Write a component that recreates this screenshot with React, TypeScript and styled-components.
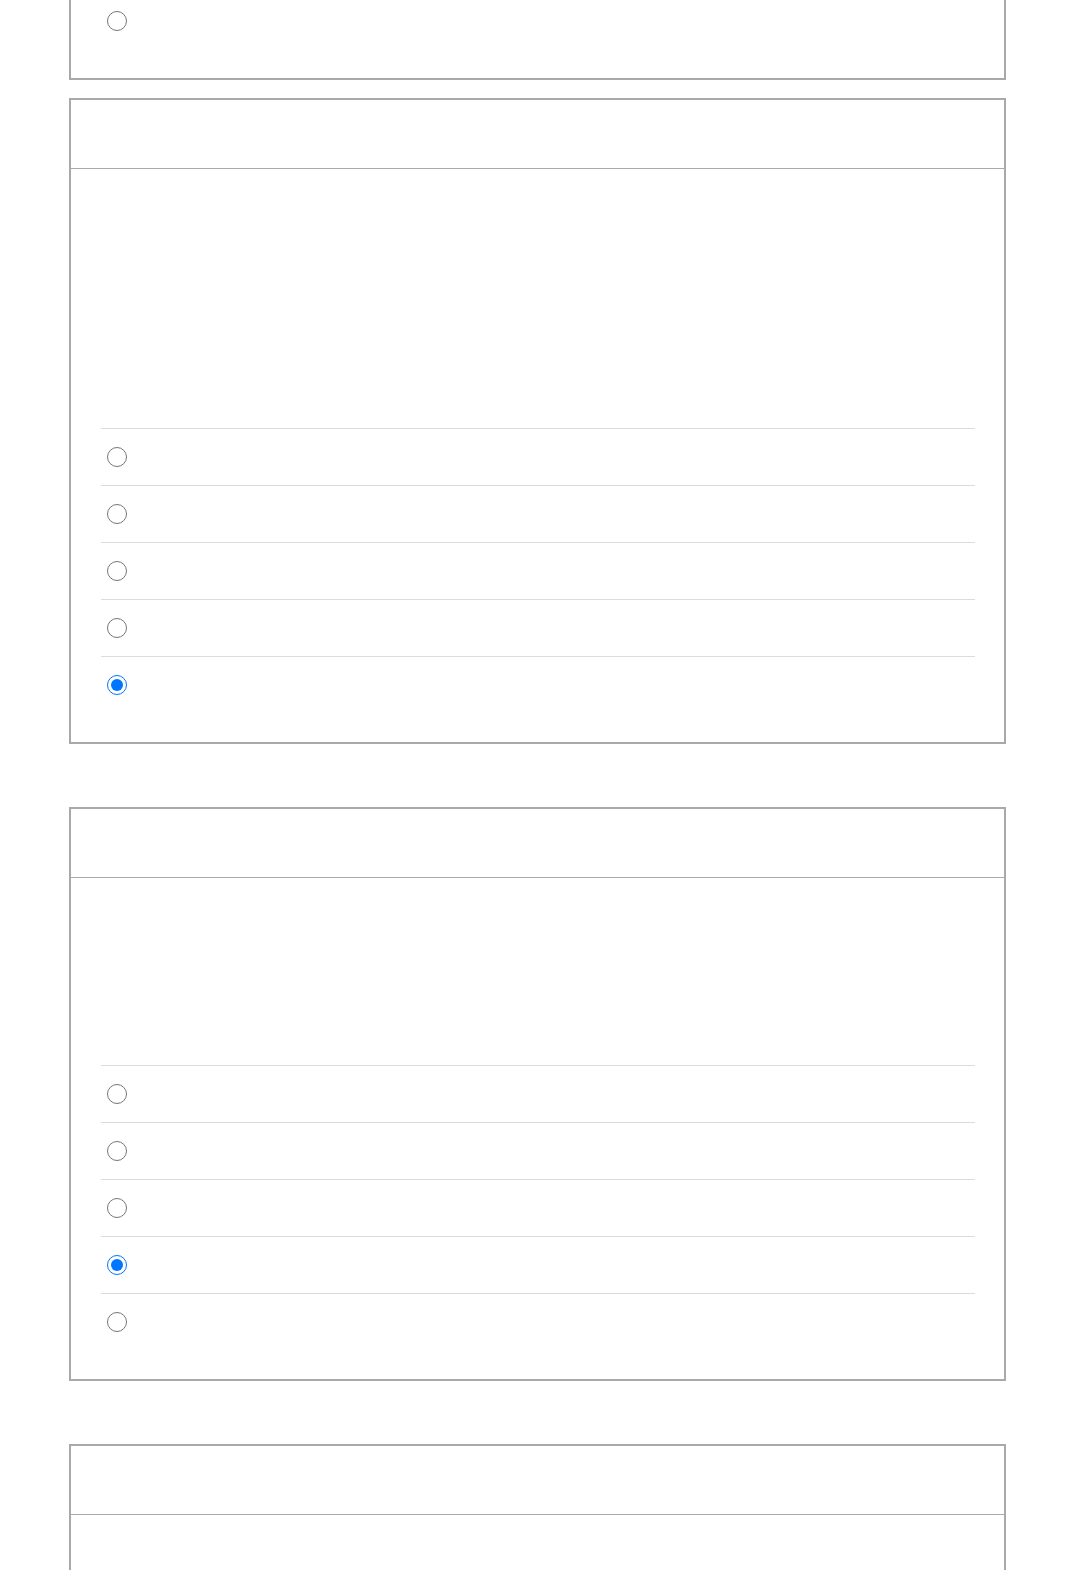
import React from "react";
import styled, { createGlobalStyle } from "styled-components";

const Global = createGlobalStyle`
  html, body { margin: 0; padding: 0; background: #ffffff; }
  body { font-family: "Liberation Sans", Arial, sans-serif; color: #222; }
`;

const Page = styled.div`
  display: flex;
  flex-direction: column;
  gap: 63px;
  width: 937px;
  margin: -494px 0 0 69px;
`;

const Section = styled.section`
  display: flex;
  flex-direction: column;
  gap: 18px;
`;

const Panel = styled.div`
  border: 2px solid #a9a9a9;
  background: #fff;
`;

const PanelHeader = styled.div`
  height: 68px;
  border-bottom: 1px solid #a9a9a9;
`;

const PanelBody = styled.div`
  padding: 30px 29px 29px 30px;
`;

const Spacer = styled.div<{ $h: number }>`
  height: ${(p) => p.$h}px;
`;

const List = styled.ul`
  list-style: none;
  margin: 0;
  padding: 0;
`;

const Row = styled.li`
  height: 56px;
  border-top: 1px solid #dcdcdc;
  display: flex;
  align-items: center;
  padding-left: 6px;
`;

const Radio = styled.input.attrs({ type: "radio" })`
  width: 20px;
  height: 20px;
  margin: 0;
  accent-color: #0075ff;
`;

type PanelSpec = { spacer: number; checked: number; name: string };

const QuestionPanel: React.FC<PanelSpec> = ({ spacer, checked, name }) => (
  <Panel>
    <PanelHeader />
    <PanelBody>
      <Spacer $h={spacer} />
      <List>
        {[0, 1, 2, 3, 4].map((i) => (
          <Row key={i}>
            <Radio name={name} defaultChecked={i === checked} readOnly />
          </Row>
        ))}
      </List>
    </PanelBody>
  </Panel>
);

export default function App() {
  return (
    <>
      <Global />
      <Page>
        <Section>
          <QuestionPanel name="q0" spacer={157} checked={-1} />
          <QuestionPanel name="q1" spacer={229} checked={4} />
        </Section>
        <Section>
          <QuestionPanel name="q2" spacer={157} checked={3} />
        </Section>
        <Section>
          <QuestionPanel name="q3" spacer={157} checked={-1} />
        </Section>
      </Page>
    </>
  );
}
